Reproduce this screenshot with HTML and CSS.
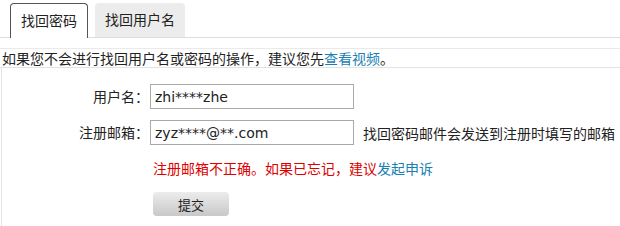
FILE: index.html
```html
<!DOCTYPE html>
<html lang="zh-CN">
<head>
  <meta charset="UTF-8" />
  <title>找回密码</title>
  <link rel="stylesheet" href="styles.css">
</head>
<body>
  <div class="tabs">
    <a class="tab active" href="#">找回密码</a>
    <a class="tab" href="#">找回用户名</a>
  </div>
  <div class="notice">如果您不会进行找回用户名或密码的操作，建议您先<a href="#">查看视频</a>。</div>
  <form class="form">
    <label class="label" for="user">用户名：</label>
    <div class="field"><input type="text" id="user" value="zhi****zhe" /></div>

    <label class="label" for="mail">注册邮箱：</label>
    <div class="field">
      <input type="text" id="mail" value="zyz****@**.com" />
      <span class="hint">找回密码邮件会发送到注册时填写的邮箱</span>
    </div>

    <div></div>
    <div class="error">注册邮箱不正确。如果已忘记，建议<a href="#">发起申诉</a></div>

    <div></div>
    <div><button type="button" class="btn">提交</button></div>
  </form>
</body>
</html>
```

FILE: styles.css
```css
body {
  margin: 0;
  width: 620px;
  font-family: "Noto Sans CJK SC", "DejaVu Sans", sans-serif;
  font-size: 14px;
  color: #222;
  background: #fff;
}
a {
  color: #1a7fb5;
  text-decoration: none;
}
.tabs {
  display: flex;
  gap: 7px;
  padding: 3px 0 0 10px;
  border-bottom: 1px solid #ddd;
  height: 34px;
}
.tab {
  display: block;
  height: 34px;
  line-height: 32px;
  padding: 0 10px;
  color: #222;
  background: #ececec;
  border-radius: 4px 4px 0 0;
}
.tab.active {
  background: #fff;
  border: 1px solid #555;
  border-bottom: none;
  height: 34px;
  margin-bottom: -1px;
  padding: 0 10px;
}
.notice {
  margin-top: 10px;
  border-top: 1px solid #eaeaea;
  border-bottom: 1px solid #e2e2e2;
  height: 18px;
  line-height: 18px;
  padding-left: 2px;
}
.form {
  display: grid;
  grid-template-columns: 148px 1fr;
  row-gap: 11px;
  padding-top: 16px;
  border-left: 1px solid #e6e6e6;
  margin-left: 1px;
  height: 142px;
  align-content: start;
}
.label {
  text-align: right;
  line-height: 25px;
  padding-right: 1px;
}
.field {
  display: flex;
  align-items: center;
  gap: 9px;
}
.field input {
  box-sizing: border-box;
  width: 204px;
  height: 25px;
  border: 1px solid #aaa;
  padding: 0 4px;
  font-family: "DejaVu Sans", sans-serif;
  font-size: 14px;
  color: #222;
  margin: 0;
}
.error {
  color: #dd0000;
  padding-left: 3px;
  margin-top: 2px;
}
.btn {
  margin: 3px 0 0 3px;
  width: 76px;
  height: 24px;
  border: none;
  border-radius: 4px;
  background: linear-gradient(#ececec, #c8c8c8);
  font-family: "Noto Sans CJK SC", sans-serif;
  font-size: 13px;
  color: #222;
  cursor: pointer;
}
```
